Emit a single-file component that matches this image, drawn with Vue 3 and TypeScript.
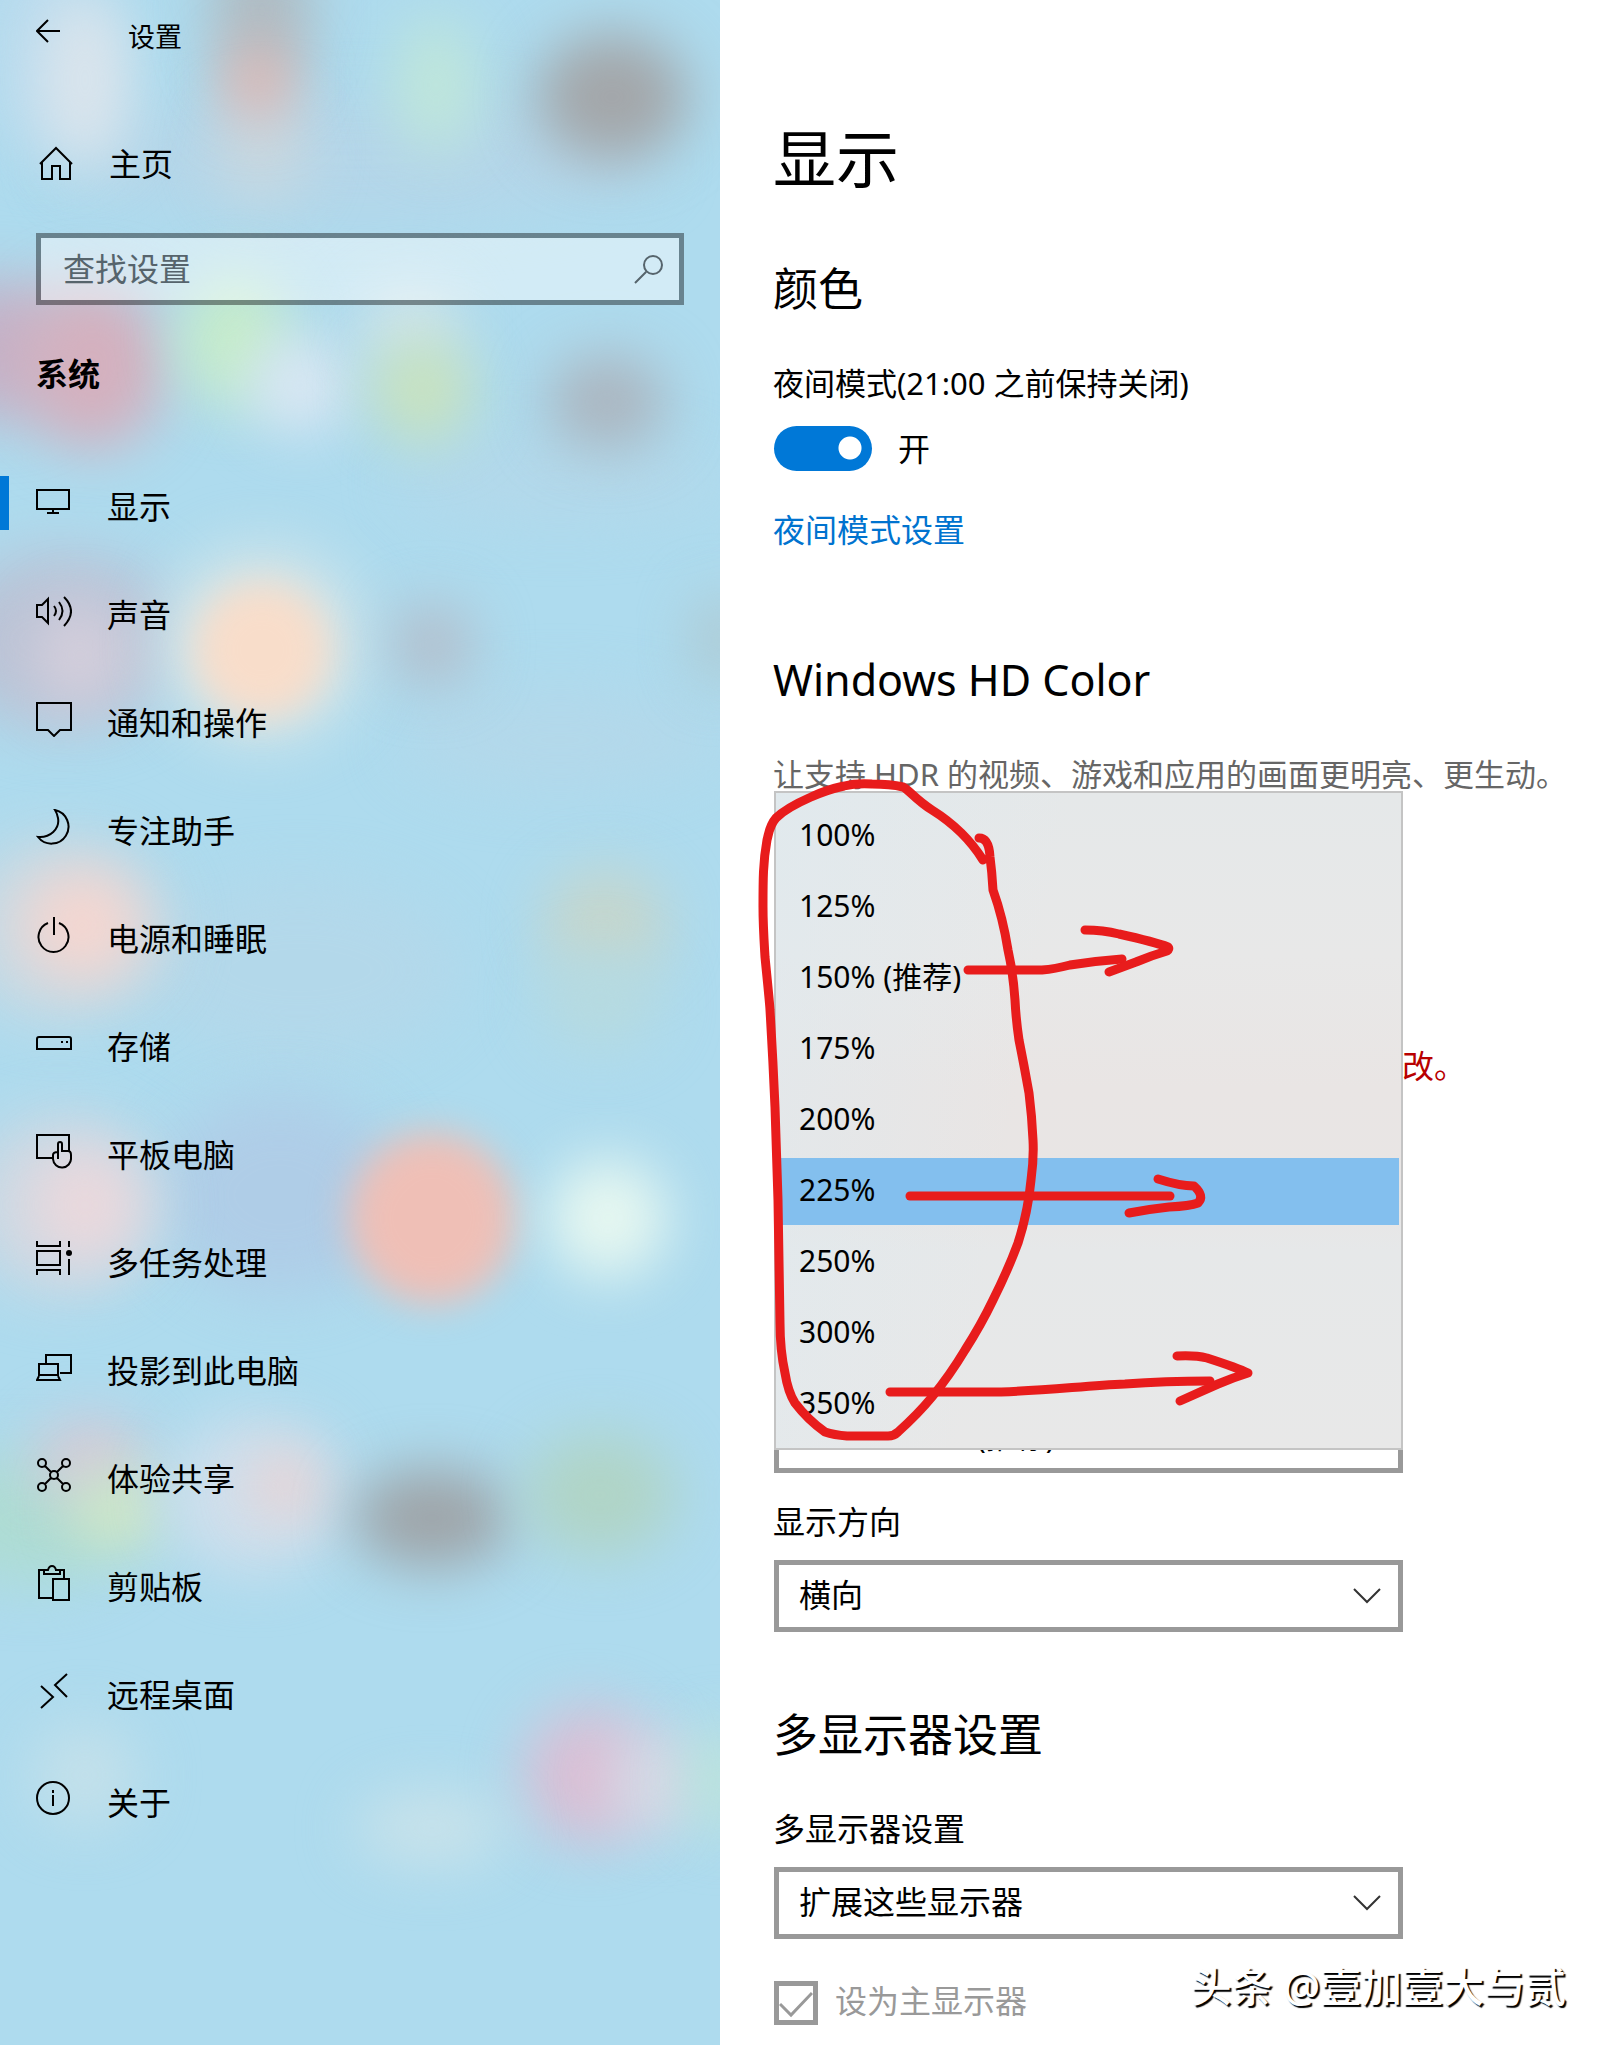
<script setup lang="ts">
import { ref } from 'vue'

interface Blob { x: number; y: number; rx: number; ry: number; c: string }

const blobs: Blob[] = [
  { x: 360, y: 160, rx: 300, ry: 60, c: '#b4d6e9' },
  { x: 40, y: 40, rx: 60, ry: 120, c: '#b8dbee' },
  { x: 560, y: 480, rx: 160, ry: 40, c: '#b3d8ea' },
  { x: 560, y: 740, rx: 160, ry: 50, c: '#b3d8ea' },
  { x: 300, y: 970, rx: 160, ry: 90, c: '#b3d8ea' },
  { x: 85, y: 80, rx: 48, ry: 90, c: '#dae4ec' },
  { x: 262, y: 10, rx: 50, ry: 80, c: '#afbbc2' },
  { x: 262, y: 150, rx: 46, ry: 52, c: '#c8d8e0' },
  { x: 258, y: 82, rx: 36, ry: 38, c: '#e2b6b0' },
  { x: 436, y: 85, rx: 42, ry: 68, c: '#bfe6da' },
  { x: 612, y: 97, rx: 76, ry: 64, c: '#a3a6a9' },
  { x: 0, y: 350, rx: 76, ry: 70, c: '#c3b2c8' },
  { x: 92, y: 365, rx: 74, ry: 84, c: '#d4b0be' },
  { x: 235, y: 340, rx: 56, ry: 68, c: '#c6ecca' },
  { x: 300, y: 385, rx: 52, ry: 48, c: '#dae7f3' },
  { x: 410, y: 325, rx: 50, ry: 42, c: '#d0e5ec' },
  { x: 422, y: 390, rx: 52, ry: 54, c: '#c8e2bf' },
  { x: 607, y: 402, rx: 60, ry: 48, c: '#abb5bf' },
  { x: 60, y: 640, rx: 120, ry: 88, c: '#bac3d6' },
  { x: 80, y: 655, rx: 48, ry: 54, c: '#d4cedb' },
  { x: 262, y: 645, rx: 104, ry: 100, c: '#d2e5e9' },
  { x: 262, y: 650, rx: 68, ry: 68, c: '#f8ddca' },
  { x: 432, y: 645, rx: 42, ry: 42, c: '#b3becb' },
  { x: 720, y: 640, rx: 28, ry: 46, c: '#aec8d0' },
  { x: 60, y: 930, rx: 110, ry: 92, c: '#c8dae4' },
  { x: 82, y: 925, rx: 62, ry: 58, c: '#f4d6d0' },
  { x: 605, y: 925, rx: 62, ry: 56, c: '#c6d6cc' },
  { x: 600, y: 1000, rx: 60, ry: 50, c: '#b6dae0' },
  { x: 280, y: 1195, rx: 120, ry: 100, c: '#afcde7' },
  { x: 60, y: 1205, rx: 100, ry: 90, c: '#ccd9e4' },
  { x: 85, y: 1205, rx: 56, ry: 58, c: '#ead8dc' },
  { x: 432, y: 1218, rx: 84, ry: 86, c: '#efbfb6' },
  { x: 608, y: 1218, rx: 60, ry: 60, c: '#e6f7f0' },
  { x: 30, y: 1520, rx: 110, ry: 66, c: '#aedcd4' },
  { x: 90, y: 1460, rx: 58, ry: 42, c: '#d5cad8' },
  { x: 118, y: 1510, rx: 46, ry: 40, c: '#d0e8c6' },
  { x: 255, y: 1495, rx: 90, ry: 78, c: '#cfdfec' },
  { x: 285, y: 1485, rx: 30, ry: 32, c: '#eed0ce' },
  { x: 432, y: 1518, rx: 80, ry: 50, c: '#9ea4a8' },
  { x: 600, y: 1495, rx: 76, ry: 62, c: '#b0d4c6' },
  { x: 590, y: 1775, rx: 68, ry: 68, c: '#dabfd5' },
  { x: 655, y: 1782, rx: 44, ry: 48, c: '#d8dae6' },
  { x: 720, y: 1780, rx: 32, ry: 54, c: '#bce4da' },
  { x: 432, y: 1828, rx: 76, ry: 38, c: '#c8e2ea' },
  { x: 85, y: 1775, rx: 54, ry: 52, c: '#c3e0ea' },
]

interface NavItem { label: string; icon: string; fill?: string }

const nav: NavItem[] = [
  { label: '显示', icon: 'M1 5H33V24H1ZM17 24V28M11 28H23' },
  { label: '声音', icon: 'M1 12H6L12 6V30L6 24H1ZM18 13Q22 18 18 23M23 9Q30 18 23 27M28 4Q42 18 28 33' },
  { label: '通知和操作', icon: 'M1 2H35V29H24L18 35L12 29H1Z' },
  { label: '专注助手', icon: 'M19 1A17 17 0 1 1 2 28C14 29 24 20 22 9Q21 4 19 1Z' },
  { label: '电源和睡眠', icon: 'M12 6A15 15 0 1 0 23 6M18 0V18' },
  { label: '存储', icon: 'M3 12H33Q35 12 35 14V24H1V14Q1 12 3 12Z', fill: 'M25 16h2v2h-2zM30 16h2v2h-2z' },
  { label: '平板电脑', icon: 'M16 25H1V2H33V18M22 26V11Q22 9 24 9Q26 9 26 11V18H32Q35 18 35 22V25A9 9 0 0 1 17 26V22Q17 19 22 19' },
  { label: '多任务处理', icon: 'M1 0V5H24V0M1 10H24V24H1ZM1 34V29H24V34M33 0V6M33 18V34', fill: 'M33 9a3 3 0 1 1 0 6a3 3 0 0 1 0-6z' },
  { label: '投影到此电脑', icon: 'M10 14V6H35V24H24M3 26V15H22V26ZM3 27L1 31H24L22 27' },
  { label: '体验共享', icon: 'M9 9L15 15M21 15L27 9M9 27L15 21M21 21L27 27M2 6a4 4 0 1 0 8 0a4 4 0 1 0-8 0M26 6a4 4 0 1 0 8 0a4 4 0 1 0-8 0M2 30a4 4 0 1 0 8 0a4 4 0 1 0-8 0M26 30a4 4 0 1 0 8 0a4 4 0 1 0-8 0M14 18a4 4 0 1 0 8 0a4 4 0 1 0-8 0' },
  { label: '剪贴板', icon: 'M16 33H3V5H12M19 5H28V14M8 5V9H24V5H20Q19 1 16 1Q13 1 12 5ZM17 14H33V35H17Z' },
  { label: '远程桌面', icon: 'M5 13L17 24L5 35M31 1L19 12L31 24' },
  { label: '关于', icon: 'M1 17a16 16 0 1 0 32 0a16 16 0 1 0-32 0M17 14V25M17 9V12' },
]

const scales = ['100%', '125%', '150% (推荐)', '175%', '200%', '225%', '250%', '300%', '350%']
const current = ref('225%')
const night = ref(true)
</script>

<template>
  <div class="page">
    <aside class="side">
      <svg class="acrylic" aria-hidden="true">
        <defs>
          <filter id="soft" x="-100%" y="-100%" width="300%" height="300%" color-interpolation-filters="sRGB">
            <feGaussianBlur stdDeviation="28" />
          </filter>
          <filter id="edge" x="-100%" y="-100%" width="300%" height="300%" color-interpolation-filters="sRGB">
            <feGaussianBlur stdDeviation="18" />
          </filter>
        </defs>
        <ellipse
          v-for="(b, i) in blobs"
          :key="i"
          :cx="b.x"
          :cy="b.y"
          :rx="b.rx"
          :ry="b.ry"
          :fill="b.c"
          :filter="b.c === '#efbfb6' || b.c === '#f8ddca' ? 'url(#edge)' : 'url(#soft)'"
        />
      </svg>
      <header class="titlebar">
        <button class="back" type="button" aria-label="返回">
          <svg width="24" height="24" viewBox="0 0 24 24"><path d="M12 1L1 12L12 23M1 12H24" /></svg>
        </button>
        <span class="app-name">设置</span>
      </header>
      <a class="home" href="#home">
        <svg width="36" height="36" viewBox="0 0 36 36"><path d="M2 18L18 2L34 18M4 16V33H14V20H22V33H32V16" /></svg>
        <span>主页</span>
      </a>
      <label class="search">
        <input type="text" placeholder="查找设置" aria-label="查找设置" />
        <svg width="30" height="30" viewBox="0 0 30 30"><path d="M10 10a9 9 0 1 0 18 0a9 9 0 1 0-18 0M12 17L1 28" /></svg>
      </label>
      <h2 class="group">系统</h2>
      <nav>
        <a v-for="(n, i) in nav" :key="n.label" href="#" class="item" :class="{ active: i === 0 }">
          <svg width="36" height="36" viewBox="0 0 36 36">
            <path :d="n.icon" />
            <path v-if="n.fill" class="solid" :d="n.fill" />
          </svg>
          <span>{{ n.label }}</span>
        </a>
      </nav>
    </aside>

    <main class="content">
      <h1>显示</h1>
      <h2 class="h-color">颜色</h2>
      <p class="night-label" id="night">夜间模式(21:00 之前保持关闭)</p>
      <label class="toggle">
        <input v-model="night" type="checkbox" aria-labelledby="night" />
        <span>{{ night ? '开' : '关' }}</span>
      </label>
      <a class="link" href="#night">夜间模式设置</a>

      <h2 class="h-hd">Windows HD Color</h2>
      <p class="hint">让支持 HDR 的视频、游戏和应用的画面更明亮、更生动。</p>

      <div class="scale">
        <p class="warn">改。</p>
        <div class="combo mixed">
          <select aria-label="分辨率"><option>3840 × 2160 (推荐)</option></select>
        </div>
        <div class="popup">
          <ul role="listbox" aria-label="缩放">
            <li v-for="s in scales" :key="s">
              <button type="button" role="option" :aria-selected="s === current" :class="{ on: s === current }" @click="current = s">{{ s }}</button>
            </li>
          </ul>
          <svg class="ink" viewBox="774 791 629 658" aria-hidden="true">
            <path d="M983 860C968 836 948 820 932 810S908 789 903 787Q890 784 872 784Q856 783 844 786Q826 790 811 797Q786 808 776 818C769 826 769 833 767 840C763 862 763 880 763 907C763 925 764 940 765 957Q770 1007 770 1010Q773 1060 775 1107L778 1200L780 1323Q780 1350 785 1373Q788 1392 795 1403Q808 1420 825 1432Q834 1435 847 1436H888Q894 1436 898 1432Q918 1414 932 1397Q950 1375 965 1350Q981 1325 993 1300Q1008 1270 1018 1243Q1028 1212 1031 1180Q1034 1158 1033 1140Q1032 1117 1029 1093Q1024 1065 1019 1040Q1016 1020 1015 1000Q1013 972 1008 950Q1003 918 993 890Q992 872 990 857Q989 838 979 838" />
            <path d="M968 970H1042Q1055 969 1070 965Q1095 961 1122 959" />
            <path d="M1085 930Q1103 930 1119 934Q1155 942 1168 947Q1170 949 1167 951Q1150 956 1136 962L1109 972" />
            <path d="M910 1196H1170" />
            <path d="M1158 1179Q1180 1186 1194 1186Q1205 1196 1198 1203Q1190 1206 1169 1207Q1150 1209 1129 1213" />
            <path d="M890 1392H987C1035 1392 1080 1386 1125 1384Q1165 1381 1210 1381" />
            <path d="M1177 1356Q1195 1355 1207 1358Q1238 1368 1248 1373Q1232 1378 1218 1384L1180 1401" />
          </svg>
        </div>
      </div>

      <label class="field-label" for="orient">显示方向</label>
      <div class="combo">
        <select id="orient"><option>横向</option></select>
        <svg width="28" height="16" viewBox="0 0 28 16"><path d="M1 1L14 14L27 1" /></svg>
      </div>

      <h2 class="h-multi">多显示器设置</h2>
      <label class="field-label multi" for="multi">多显示器设置</label>
      <div class="combo">
        <select id="multi"><option>扩展这些显示器</option></select>
        <svg width="28" height="16" viewBox="0 0 28 16"><path d="M1 1L14 14L27 1" /></svg>
      </div>
      <label class="check">
        <span class="box">
          <input type="checkbox" checked disabled />
          <svg width="34" height="34" viewBox="0 0 34 34"><path d="M1 18L12 29L33 7" /></svg>
        </span>
        <span class="check-text">设为主显示器</span>
      </label>
      <div class="mark">头条 @壹加壹大与贰</div>
    </main>
  </div>
</template>

<style>
body {
  background: #fff;
}
</style>

<style scoped>
.page {
  display: flex;
  min-height: 100vh;
  font-family: "Noto Sans", "Noto Sans CJK SC", sans-serif;
  font-size: 32px;
  line-height: 42px;
  color: #000;
}
h1, h2, p, ul {
  margin: 0;
  padding: 0;
  font-weight: 400;
}
a {
  color: inherit;
  text-decoration: none;
}
svg {
  fill: none;
  stroke: currentColor;
  stroke-width: 2;
  flex: none;
}
.solid {
  fill: currentColor;
  stroke: none;
}

.side {
  position: relative;
  z-index: 0;
  overflow: hidden;
  flex: none;
  width: 45%;
  max-width: 720px;
  box-sizing: border-box;
  background: #aedbee;
}
.acrylic {
  position: absolute;
  inset: 0;
  width: 100%;
  height: 100%;
  z-index: -1;
  stroke: none;
}
.titlebar {
  display: flex;
  align-items: flex-start;
  gap: 68px;
  padding: 16px 36px 0;
}
.back {
  display: flex;
  padding: 3px 0;
  border: 0;
  background: none;
  color: inherit;
}
.app-name {
  font-size: 27px;
}
.home {
  display: flex;
  align-items: center;
  gap: 35px;
  height: 42px;
  margin-top: 85px;
  padding: 0 38px;
}
.search {
  position: relative;
  display: block;
  margin: 48px 36px 0;
}
.search input {
  display: block;
  width: 100%;
  height: 72px;
  box-sizing: border-box;
  padding: 0 60px 2px 22px;
  border: 5px solid rgba(0, 0, 0, 0.4);
  border-radius: 0;
  background: rgba(255, 255, 255, 0.45);
  background-clip: padding-box;
  font: inherit;
  outline: 0;
}
.search input::placeholder {
  color: #56646c;
  opacity: 1;
}
.search svg {
  position: absolute;
  right: 20px;
  top: 22px;
  color: #56646c;
}
.group {
  margin: 48px 36px 54px;
  font-size: 32px;
  font-weight: 700;
}
.item {
  display: flex;
  align-items: center;
  gap: 35px;
  height: 108px;
  padding-left: 36px;
  position: relative;
}
.item span {
  padding-top: 7px;
}
.active::before {
  content: "";
  position: absolute;
  left: 0;
  top: 27px;
  width: 9px;
  height: 54px;
  background: #0078d7;
}

.content {
  position: relative;
  flex: 1;
  min-width: 0;
  padding: 116px 36px 20px 53px;
}
h1 {
  font-size: 63px;
  line-height: 84px;
}
.content h2 {
  font-size: 45px;
  line-height: 60px;
}
.h-color {
  margin-top: 59px;
}
.night-label {
  margin-top: 43px;
  font-size: 31px;
}
.toggle {
  display: flex;
  align-items: center;
  gap: 26px;
  height: 45px;
  margin: 22px 0 0 1px;
}
.toggle input {
  appearance: none;
  width: 98px;
  height: 45px;
  margin: 0;
  border-radius: 23px;
  background: radial-gradient(circle at 76px 22px, #fff 11px, #0078d7 12px);
}
.link {
  display: block;
  margin-top: 38px;
  color: #0073cf;
}
.content .h-hd {
  margin-top: 99px;
  font-size: 43px;
}
.hint {
  margin-top: 43px;
  font-size: 31px;
  color: #666;
  white-space: nowrap;
}
.scale {
  position: relative;
  max-width: 629px;
  margin-left: 1px;
  padding-top: 250px;
}
.warn {
  margin: 0 -60px 314px 628px;
  color: #b80000;
}
.popup {
  position: absolute;
  top: -4px;
  left: 0;
  right: 0;
  box-sizing: border-box;
  padding: 8px 2px;
  border: 2px solid #c4c4c4;
  background: linear-gradient(100deg, rgba(222, 234, 240, 0.6), transparent 40%),
    linear-gradient(#e5e8e9, #e8e8e8 25%, #e9e5e4 45%, #e8e5e4 60%, #e6e8e9 70%, #e8e8e8);
}
.popup li {
  display: block;
  padding: 2px 0;
}
.popup button {
  display: block;
  width: 100%;
  height: 67px;
  padding: 0 21px 4px;
  border: 0;
  background: none;
  font: inherit;
  font-size: 30px;
  color: inherit;
  text-align: left;
}
.popup .on {
  background: #83bfee;
}
.ink {
  position: absolute;
  left: -2px;
  top: -2px;
  width: 629px;
  height: 658px;
  overflow: visible;
  pointer-events: none;
  stroke: #e81c1c;
  stroke-width: 9;
  stroke-linecap: round;
  stroke-linejoin: round;
}
.combo {
  position: relative;
  max-width: 629px;
  margin-left: 1px;
}
.combo select {
  display: block;
  appearance: none;
  width: 100%;
  height: 72px;
  padding: 0 60px 2px 20px;
  border: 5px solid #999;
  border-radius: 0;
  background: #fff;
  color: #000;
  font: inherit;
}
.combo.mixed {
  margin-left: 0;
}
.mixed select {
  padding-bottom: 0;
  font-size: 30px;
}
.combo svg {
  position: absolute;
  right: 22px;
  top: 28px;
  color: #333;
}
.field-label {
  display: block;
  margin: 28px 0 17px;
}
.h-multi {
  margin-top: 73px;
}
.multi {
  margin-top: 43px;
}
.check {
  display: flex;
  align-items: center;
  gap: 17px;
  margin: 41px 0 0 1px;
  color: #999;
}
.check-text {
  padding-bottom: 4px;
}
.box {
  position: relative;
  display: flex;
}
.box input {
  appearance: none;
  width: 44px;
  height: 44px;
  margin: 0;
  border: 5px solid #999;
}
.box svg {
  position: absolute;
  left: 5px;
  top: 5px;
  stroke-width: 3;
}
.mark {
  position: absolute;
  right: 36px;
  bottom: 32px;
  font-size: 41px;
  font-weight: 500;
  line-height: 56px;
  color: #fff;
  white-space: nowrap;
  text-shadow: 2px 2px 1px #000;
}
</style>
